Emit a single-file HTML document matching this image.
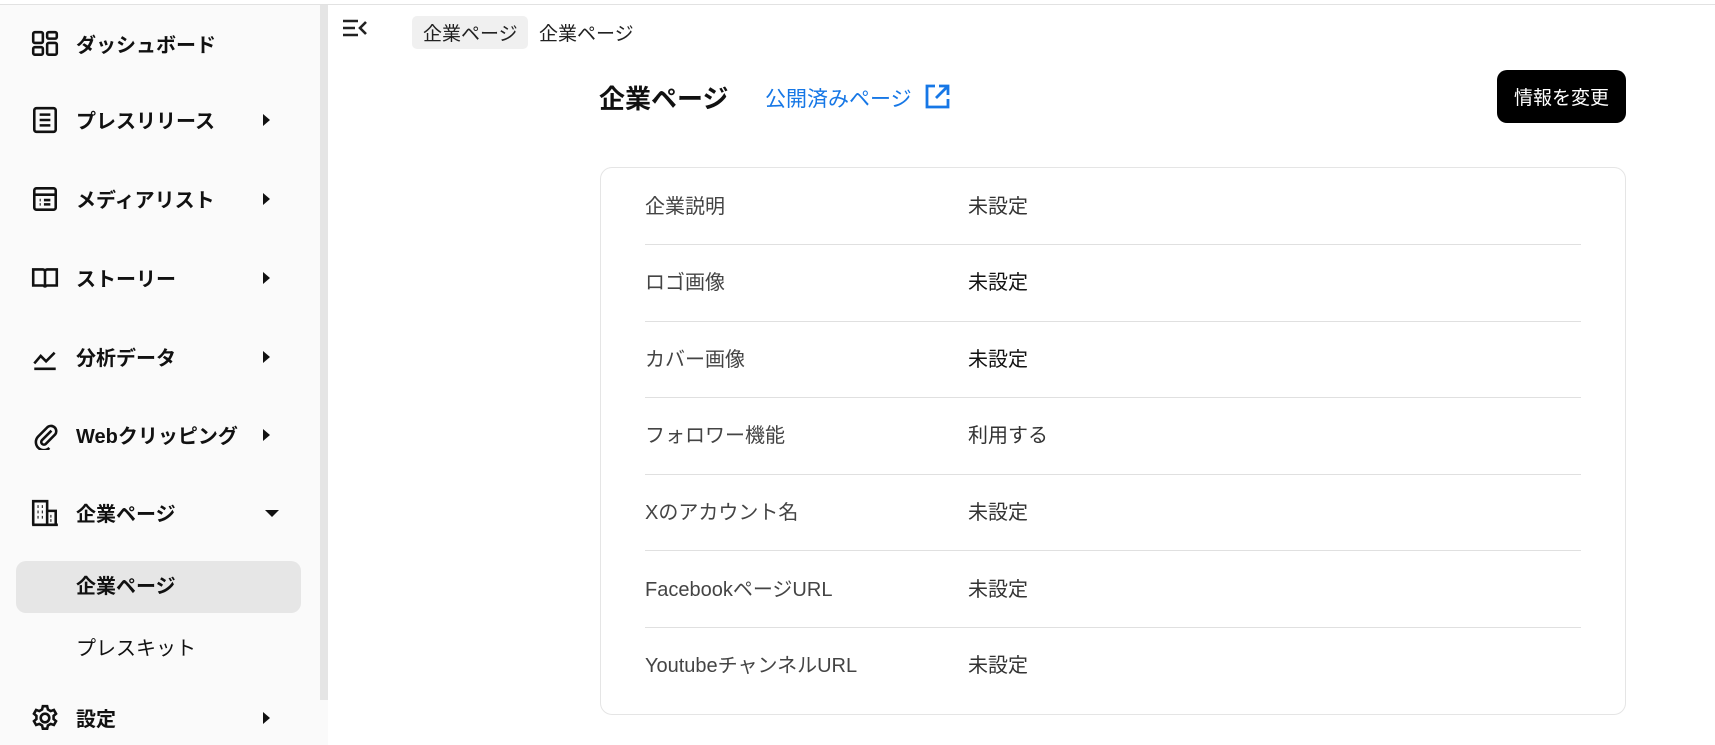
<!DOCTYPE html>
<html><head><meta charset="utf-8"><style>
*{margin:0;padding:0;box-sizing:border-box}
body{width:1715px;height:745px;overflow:hidden;background:#fff;font-family:"Liberation Sans","Noto Sans CJK JP",sans-serif;color:#111;position:relative}
.topline{position:absolute;left:0;top:4px;width:1715px;height:1px;background:#e2e2e2}
.side{position:absolute;left:0;top:5px;width:320px;height:740px;background:#fafafa}
.scroll{position:absolute;left:320px;top:5px;width:8px;height:695px;background:#e5e5e5}
.side2{position:absolute;left:320px;top:700px;width:8px;height:45px;background:#fafafa}
.item{position:absolute;left:0;width:320px;height:40px;display:flex;align-items:center;font-weight:bold;font-size:20px}
.item svg.ic{position:absolute;left:30px;width:30px;height:30px}
.item .t{position:absolute;left:76px;top:5px}
.arr{position:absolute;left:263px;width:0;height:0;border-top:6px solid transparent;border-bottom:6px solid transparent;border-left:7px solid #111}
.down{position:absolute;left:265px;width:0;height:0;border-left:7px solid transparent;border-right:7px solid transparent;border-top:7px solid #111}
.sel{position:absolute;left:16px;top:561px;width:285px;height:52px;border-radius:10px;background:#e6e6e6}
.row{position:absolute;left:645px;font-size:20px;color:#444}
.val{position:absolute;left:968px;font-size:20px;color:#333}
.div{position:absolute;left:645px;width:936px;height:1px;background:#e0e0e0}
</style></head><body>
<div class="topline"></div>
<div class="side"></div><div class="scroll"></div><div class="side2"></div>

<div class="item" style="top:24px"><svg class="ic" viewBox="0 0 28 28" fill="none" stroke="#111" stroke-width="2.4"><rect x="3" y="3" width="9" height="10" rx="1.5"/><rect x="16" y="3" width="9" height="6" rx="1.5"/><rect x="3" y="17" width="9" height="7" rx="1.5"/><rect x="16" y="13" width="9" height="11" rx="1.5"/></svg><span class="t">ダッシュボード</span></div>
<div class="item" style="top:100px"><svg class="ic" viewBox="0 0 28 28" fill="none" stroke="#111" stroke-width="2.4"><rect x="4" y="3" width="20" height="22" rx="2"/><path d="M9 9h10M9 14h10M9 19h10"/></svg><span class="t">プレスリリース</span><span class="arr"></span></div>
<div class="item" style="top:179px"><svg class="ic" viewBox="0 0 28 28" fill="none" stroke="#111" stroke-width="2.4"><rect x="4" y="4" width="20" height="20" rx="2"/><path d="M4 10h20M9 15h1M13 15h6M9 19h1M13 19h6"/></svg><span class="t">メディアリスト</span><span class="arr"></span></div>
<div class="item" style="top:258px"><svg class="ic" viewBox="0 0 28 28" fill="none" stroke="#111" stroke-width="2.4"><path d="M3 6h9a2 2 0 0 1 2 2v15a2 2 0 0 0-2-2H3zM25 6h-9a2 2 0 0 0-2 2v15a2 2 0 0 1 2-2h9z"/></svg><span class="t">ストーリー</span><span class="arr"></span></div>
<div class="item" style="top:337px"><svg class="ic" viewBox="0 0 28 28" fill="none" stroke="#111" stroke-width="2.4"><path d="M4 20l6-7 5 5 8-8"/><path d="M4 25h20"/></svg><span class="t">分析データ</span><span class="arr"></span></div>
<div class="item" style="top:415px"><svg class="ic" viewBox="0 0 28 28" fill="none" stroke="#111" stroke-width="2.4"><path d="M20 10l-9 9a2.5 2.5 0 0 0 3.5 3.5l9-9a5 5 0 0 0-7-7l-9 9a7.5 7.5 0 0 0 10.6 10.6"/></svg><span class="t">Webクリッピング</span><span class="arr"></span></div>
<div class="item" style="top:493px"><svg class="ic" viewBox="0 0 28 28" fill="none" stroke="#111" stroke-width="2.4"><path d="M3 25V3h13v22M16 12h8v13M2 25h24"/><path d="M7 8h1M11 8h1M7 13h1M11 13h1M7 18h1M11 18h1M19 17h1M19 21h1" stroke-width="2.6"/></svg><span class="t">企業ページ</span><span class="down"></span></div>
<div class="sel"></div>
<div class="item" style="top:565px"><span class="t">企業ページ</span></div>
<div class="item" style="top:627px;font-weight:normal"><span class="t">プレスキット</span></div>
<div class="item" style="top:698px"><svg class="ic" viewBox="0 0 28 28" fill="none" stroke="#111" stroke-width="2.4"><circle cx="14" cy="14" r="4"/><path d="M12 3h4l.7 3 2.6 1.5 3-1 2 3.5-2.3 2v3l2.3 2-2 3.5-3-1-2.6 1.5-.7 3h-4l-.7-3-2.6-1.5-3 1-2-3.5 2.3-2v-3l-2.3-2 2-3.5 3 1L11.3 6z"/></svg><span class="t">設定</span><span class="arr"></span></div>

<svg style="position:absolute;left:342px;top:18px" width="26" height="20" viewBox="0 0 26 20" fill="none" stroke="#222" stroke-width="2.6"><path d="M1 3h15M1 10h12M1 17h15M24 4l-6 6 6 6"/></svg>
<div style="position:absolute;left:412px;top:16px;width:116px;height:33px;background:#f0f0f0;border-radius:5px"></div>
<div style="position:absolute;left:423px;top:19px;font-size:19px;color:#222">企業ページ</div>
<div style="position:absolute;left:539px;top:19px;font-size:19px;color:#222">企業ページ</div>

<div style="position:absolute;left:599px;top:79px;font-size:26px;font-weight:bold">企業ページ</div>
<div style="position:absolute;left:765px;top:83px;font-size:21px;color:#1677e6">公開済みページ</div>
<svg style="position:absolute;left:924px;top:83px" width="27" height="27" viewBox="0 0 27 27" fill="none" stroke="#1677e6" stroke-width="2.8"><path d="M11 3H3v21h21v-8M15 3h9v9M24 3L12 15"/></svg>
<div style="position:absolute;left:1497px;top:70px;width:129px;height:53px;background:#000;border-radius:10px;color:#fff;font-size:19px;display:flex;align-items:center;justify-content:center">情報を変更</div>

<div style="position:absolute;left:600px;top:167px;width:1026px;height:548px;border:1px solid #e5e5e5;border-radius:12px"></div>
<div class="row" style="top:190px">企業説明</div><div class="val" style="top:190px">未設定</div>
<div class="div" style="top:244px"></div>
<div class="row" style="top:266px">ロゴ画像</div><div class="val" style="top:266px;color:#111">未設定</div>
<div class="div" style="top:321px"></div>
<div class="row" style="top:343px">カバー画像</div><div class="val" style="top:343px;color:#111">未設定</div>
<div class="div" style="top:397px"></div>
<div class="row" style="top:419px">フォロワー機能</div><div class="val" style="top:419px">利用する</div>
<div class="div" style="top:474px"></div>
<div class="row" style="top:496px">Xのアカウント名</div><div class="val" style="top:496px">未設定</div>
<div class="div" style="top:550px"></div>
<div class="row" style="top:573px">FacebookページURL</div><div class="val" style="top:573px">未設定</div>
<div class="div" style="top:627px"></div>
<div class="row" style="top:649px">YoutubeチャンネルURL</div><div class="val" style="top:649px">未設定</div>
</body></html>
